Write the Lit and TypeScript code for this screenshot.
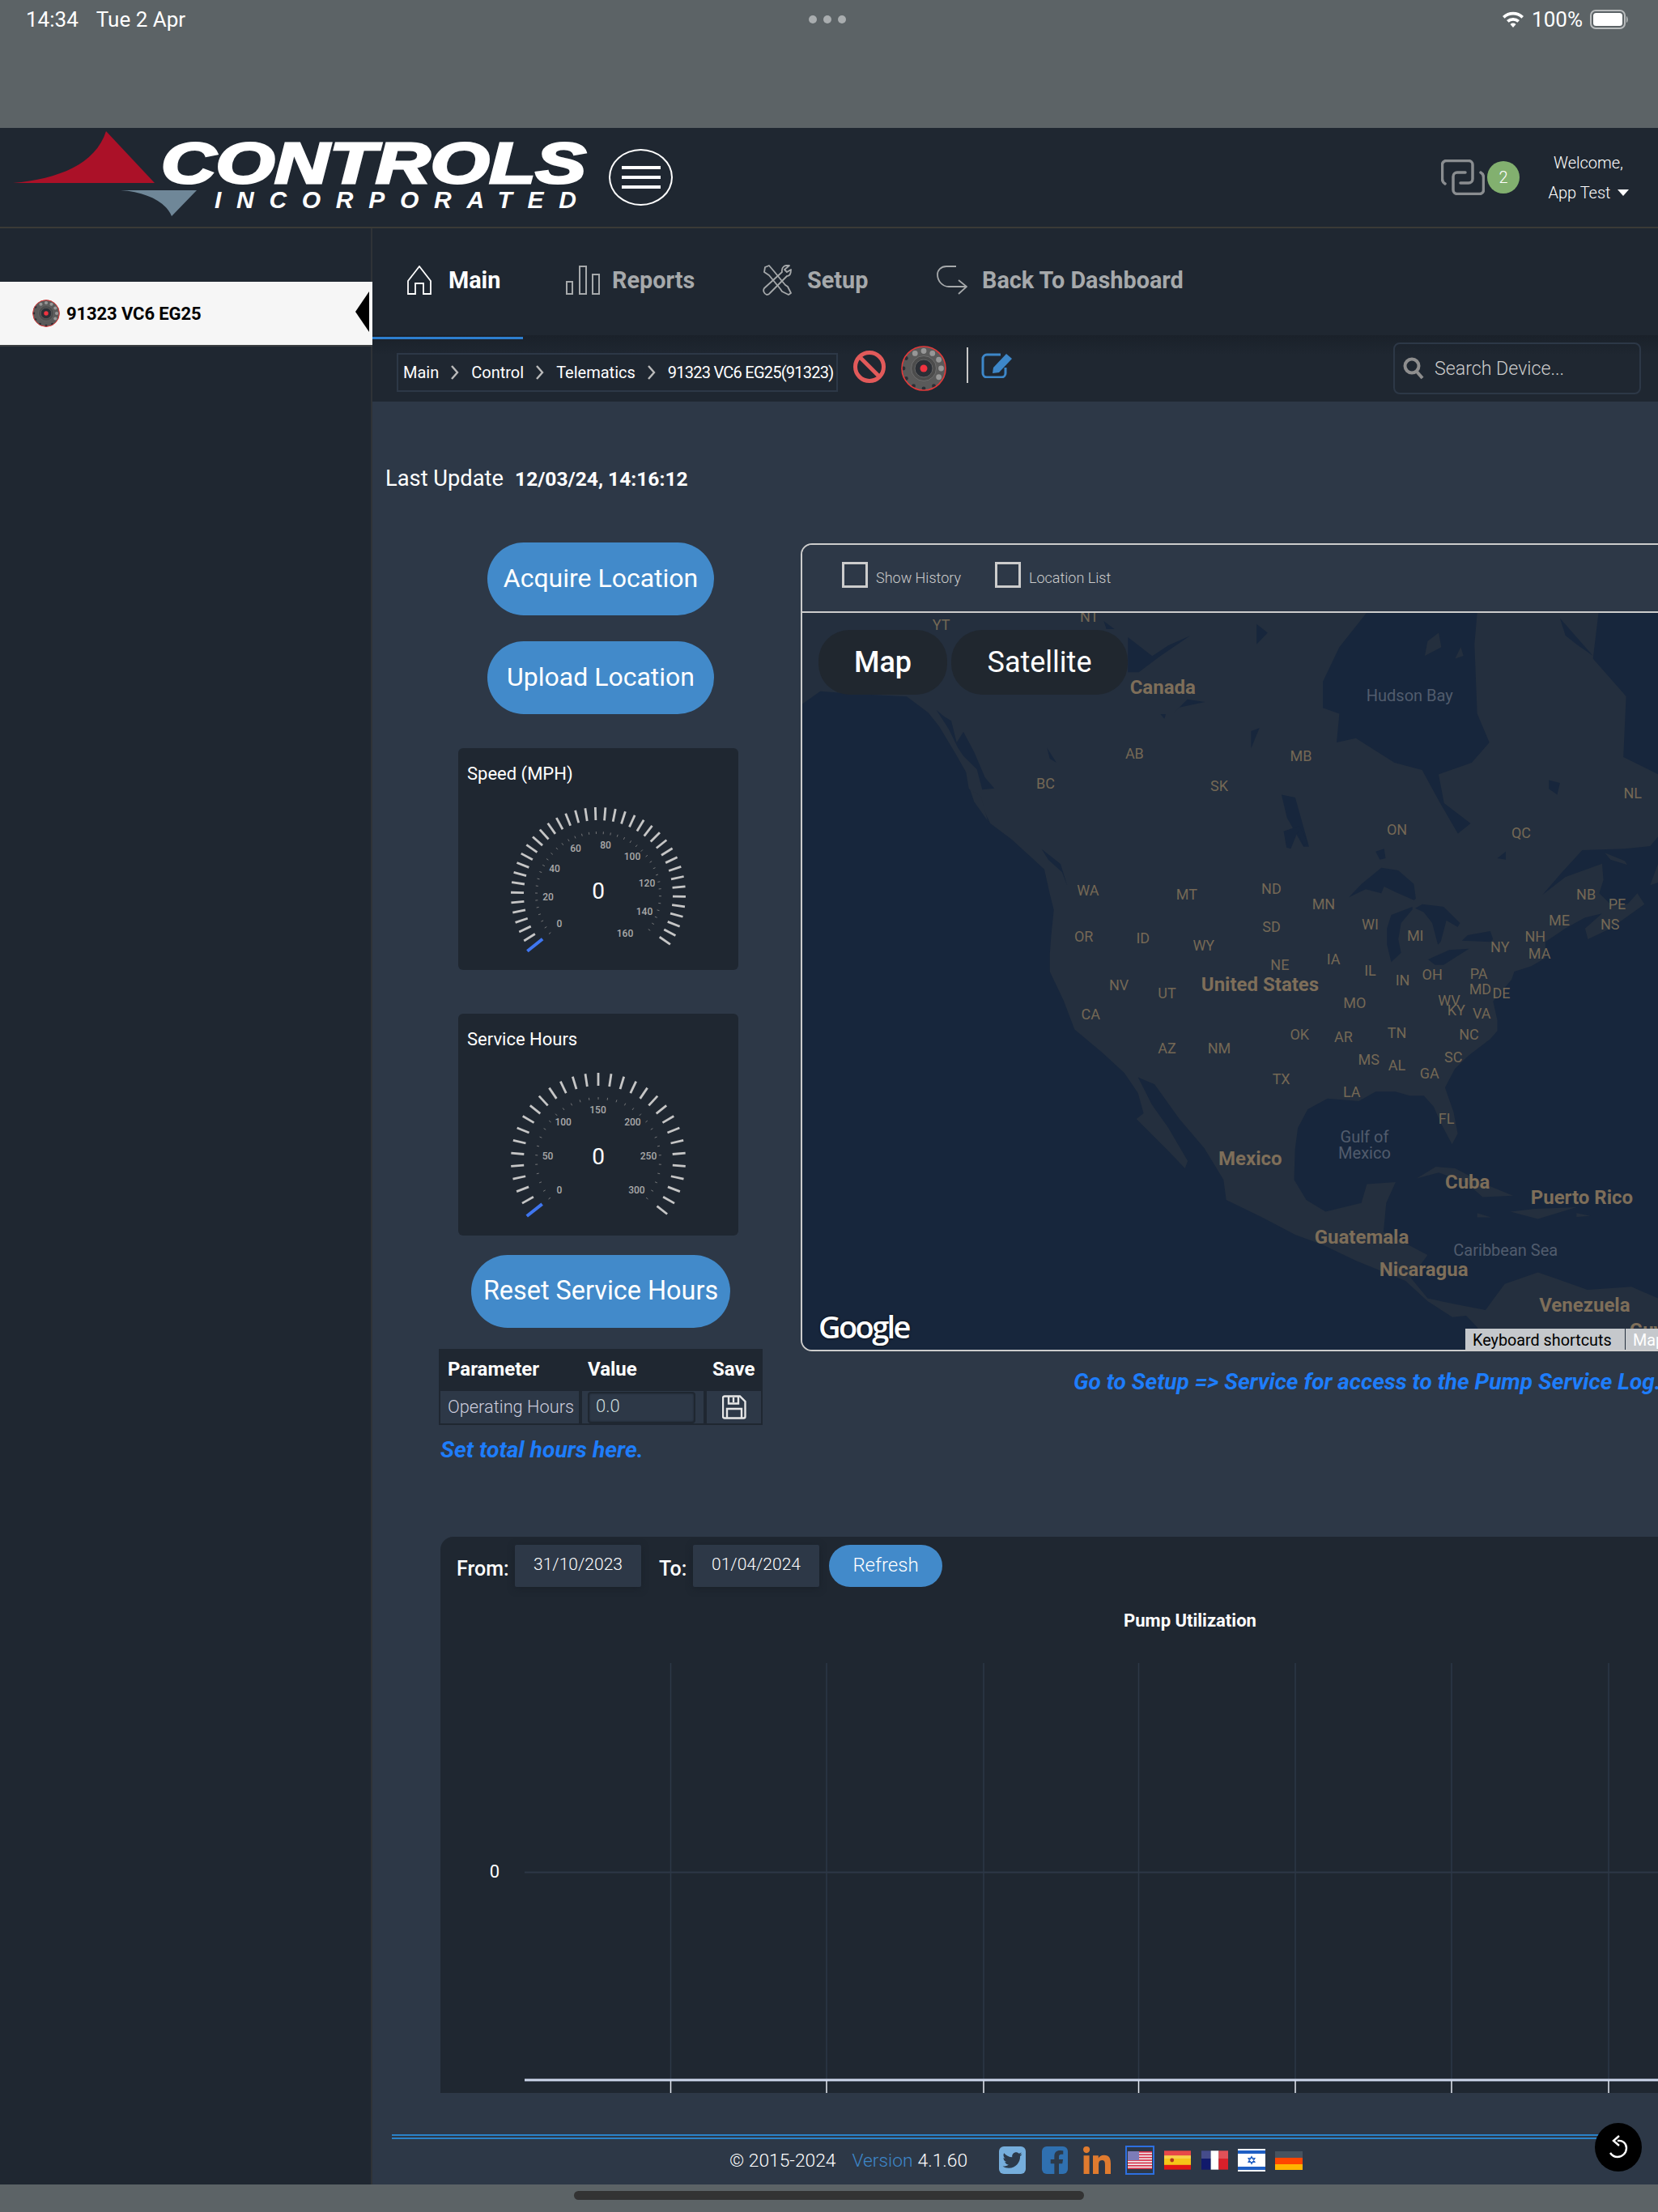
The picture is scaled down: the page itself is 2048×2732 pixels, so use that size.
import { LitElement, html, css, svg } from "lit";
import { customElement } from "lit/decorators.js";

const conv = (ox: number, oy: number, fx: number, fy: number) => (a: number[]) => { const o: string[] = []; for (let i = 0; i < a.length; i += 2) o.push(`${(ox + a[i] / fx).toFixed(1)},${(oy + a[i + 1] / fy).toFixed(1)}`); return o.join(" "); };
const z5 = conv(980, 660, 1.468, 2.8);
const z6 = conv(980, 1200, 1.468, 2.8);
const ca = conv(1500, 1020, 2.861, 3);
const cb = conv(990, 757, 3, 3);

const LAND = [
  z5([0,270,1568,270]),
  ca([1568,40,1540,75,1450,85,1300,90,1230,170,1160,255,1240,190,1370,140,1375,200,1360,250,1395,285,1460,290,1495,250,1520,290,1400,380,1320,420,1310,380,1370,325,1310,340,1240,380,1170,430,1170,490,1120,520,1060,540,1050,570,985,650,1000,720,1000,760,975,790,900,850,850,900,815,970,845,1060,860,1140,840,1180,800,1100,775,1040,740,1000,690,1000,640,985,570,985,510,1020,400,1010,330,1050,295,1120,285,1200]),
  z6([908,720,930,790,965,830,1030,800,1040,735,1092,728,1075,800,1070,900,1120,950,1150,980,1120,1060,1150,1130,1200,1150,1255,1170,1290,1080,1350,1040,1380,1060,1440,1100,1520,1090,1568,1130,1568,1312,1260,1312,1240,1230,1220,1190,1195,1195,1150,1140,1110,1070,1020,1000,960,945,910,910,850,850,785,790,780,720,745,610,700,510,655,390,625,365,650,460,680,540,715,655,710,680,680,620,622,510,635,490,625,420,600,350,560,280,510,200,490,100,465,0]),
  z5([465,1450]),
  cb([925,1200,935,1100,920,1040,900,950,780,840,700,780,660,700,620,650,610,590,570,520,510,420,470,370,390,310,200,300,70,290,0,340]),
].join(" ");
const WATER = [
  z5([1040,270,1240,270,1235,380,1240,620,1262,720,1230,790,1170,830,1180,930,1228,1000,1205,1035,1170,920,1140,815,1090,790,1020,705,985,720,990,620,960,600,960,510,990,390]),
  z5([1460,270,1450,430,1510,560,1505,770,1568,830,1568,270]),
  z5([1390,290,1450,420,1420,380,1400,350]),
  z5([830,680,845,670,830,740]),
  z5([885,900,910,910,935,1080,925,1080,895,980]),
  z5([840,310,860,340,840,380]),
  z5([1370,850,1390,860,1385,900,1370,880]),
  cb([1210,90,1300,160,1360,120,1440,85,1330,160,1250,220,1210,220]),
  cb([1380,370,1430,320,1495,330,1400,350]),
  cb([1330,375,1350,375,1345,392]),
  cb([1120,30,1160,60,1130,60]),
  cb([500,360,530,385,555,400,575,480,600,440,640,515,680,610,715,650,670,655,650,580,600,530,580,500,545,430]),
  cb([890,875,960,930,985,1010,965,960,915,915]),
  cb([910,500,945,555,920,540]),
  ca([475,265,520,215,590,155,650,165,705,215,712,270,705,275,640,245,600,225,590,250,535,235]),
  ca([625,330,700,300,700,310,660,360,650,420,660,470,625,505,610,440,610,380]),
  ca([710,305,735,290,810,300,868,360,860,375,820,350,800,430,790,440,770,360,740,320]),
  ca([755,495,830,460,900,455,810,515,780,515]),
  ca([875,425,895,405,975,390,985,420,975,430]),
  ca([570,95,600,85,605,120,585,125]),
  ca([245,20,300,0,330,60,315,75,295,20,270,85,255,80]),
  ca([1000,120,1030,95,1030,125]),
];
const ISLES = [
  z5([1150,370,1170,340,1175,390,1145,420]),
  z5([1210,390,1200,430,1215,420]),
  z6([1130,715,1165,675,1200,680,1260,740,1305,775,1250,780,1220,730,1170,695]),
  z6([1300,830,1345,820,1420,815,1350,855]),
  z6([1240,835,1265,850,1240,850]),
  z6([1420,835,1445,845,1420,848]),
  cb([625,655,665,680,690,770,640,700]),
  ca([1380,100,1450,130,1460,145,1400,125]),
  ca([1568,140,1540,220,1568,210]),
];
const LABELS: [string, number, number, number][] = [
  ["YT",667,443,0],["NT",772,437,0],["Canada",824,487,1],["Hudson Bay",999,493,2],["AB",804,534,0],["MB",922,536,0],["BC",741,555,0],["SK",864,557,0],["NL",1157,562,0],["ON",990,588,0],["QC",1078,590,0],
  ["WA",771,631,0],["MT",841,634,0],["ND",901,630,0],["NB",1124,634,0],["PE",1146,641,0],["MN",938,641,0],["ME",1105,652,0],["NS",1141,655,0],["SD",901,657,0],["WI",971,655,0],["MI",1003,663,0],["OR",768,664,0],["ID",810,665,0],["WY",853,670,0],["NH",1088,664,0],["NY",1063,671,0],["MA",1091,676,0],["NE",907,684,0],["IA",945,680,0],["IL",971,688,0],["IN",994,695,0],["OH",1015,691,0],["PA",1048,690,0],["MD",1049,701,0],["NV",793,698,0],["UT",827,704,0],["United States",893,698,1],["DE",1064,704,0],["WV",1027,709,0],["MO",960,711,0],["KY",1032,716,0],["VA",1050,718,0],["CA",773,719,0],["OK",921,733,0],["AR",952,735,0],["TN",990,732,0],["NC",1041,733,0],["AZ",827,743,0],["NM",864,743,0],["MS",970,751,0],["AL",990,755,0],["SC",1030,749,0],["GA",1013,761,0],["TX",908,765,0],["LA",958,774,0],["FL",1025,793,0],
  ["Gulf of",967,806,2],["Mexico",967,817,2],["Mexico",886,821,1],["Cuba",1040,838,1],["Puerto Rico",1121,849,1],["Guatemala",965,877,1],["Caribbean Sea",1067,886,2],["Nicaragua",1009,900,1],["Venezuela",1123,925,1],["Guyana",1178,943,1],
];

const gaugeSvg = (n: number, start: number, end: number, labels: [string, number, number][]) => {
  const ticks = [];
  const minors = [];
  const rad = (d: number) => (d - 90) * Math.PI / 180;
  for (let i = 0; i <= n; i++) {
    const a = rad(start + (end - start) * i / n);
    const blue = i === 0;
    const r1 = blue ? 88 : 92, r2 = blue ? 112 : 108;
    ticks.push(svg`<line x1=${173 + r1 * Math.cos(a)} y1=${181 + r1 * Math.sin(a)} x2=${173 + r2 * Math.cos(a)} y2=${181 + r2 * Math.sin(a)} stroke=${blue ? "#3f76f0" : "#c6c6c6"} stroke-width=${blue ? 4 : 2.8}></line>`);
    const b1 = 78, b2 = 75;
    minors.push(svg`<line x1=${173 + b1 * Math.cos(a)} y1=${181 + b1 * Math.sin(a)} x2=${173 + b2 * Math.cos(a)} y2=${181 + b2 * Math.sin(a)} stroke="#8a8a8a" stroke-width="0.8"></line>`);
  }
  return html`<svg class="gauge" width="346" height="224" viewBox="0 50 346 224">
    ${ticks}${minors}
    ${labels.map(l => svg`<text class="gl" x=${l[1]} y=${l[2]} text-anchor="middle" dominant-baseline="central">${l[0]}</text>`)}
    <text class="gv" x="173" y="176" text-anchor="middle" dominant-baseline="central">0</text>
  </svg>`;
};

const gear = (s: number) => {
  const bumps = [];
  for (let i = 0; i < 12; i++) {
    const a = -Math.PI * 2 / 3 + i * Math.PI / 6;
    const light = i < 6;
    bumps.push(light
      ? svg`<circle cx=${28 + 21.5 * Math.cos(a)} cy=${28 + 21.5 * Math.sin(a)} r="3.400" fill="#979797"></circle>`
      : svg`<circle cx=${28 + 25 * Math.cos(a)} cy=${28 + 25 * Math.sin(a)} r="2.400" fill="#2a2f36"></circle>`);
  }
  return html`<svg width=${s} height=${s} viewBox="0 0 56 56"><circle cx="28" cy="28" r="27" fill="#5a5a5a"></circle>${bumps}<circle cx="28" cy="28" r="27" fill="none" stroke="#e23a3a" stroke-width="1.600"></circle><circle cx="28" cy="28" r="15.500" fill="#4c4c4c" stroke="#6e6e6e" stroke-width="1"></circle><circle cx="28" cy="28" r="11" fill="#2b2f36" stroke="#666" stroke-width="1"></circle><circle cx="28" cy="28" r="4.500" fill="#ef3340"></circle></svg>`;
};

const shine = svg`<rect x="0" y="0" width="34" height="10" fill="#fff" opacity=".22"></rect>`;

@customElement("app-root")
export class AppRoot extends LitElement {
  static styles = css`
    :host { display:block; width:2048px; height:2732px; overflow:hidden; position:relative; background:#2d3847; font-family:Roboto,"Liberation Sans",sans-serif; color:#fff; }
    * { box-sizing:border-box; }
    svg { display:block; flex:none; }
    .status { height:158px; background:#5c6366; display:grid; grid-template-columns:1fr auto 1fr; align-items:start; padding:10px 36px 0 32px; font-size:26px; }
    .status .l { display:flex; gap:22px; line-height:28px; }
    .dots { display:flex; gap:8px; margin-top:9px; }
    .dots i { width:10px; height:10px; border-radius:50%; background:#a9adaf; }
    .status .r { display:flex; justify-content:flex-end; align-items:center; gap:9px; line-height:28px; }
    .header { height:124px; background:#1f2731; border-bottom:2px solid #3a3a36; display:flex; align-items:center; padding-right:36px; }
    .logo-c { font:italic 700 70px "Liberation Sans",sans-serif; fill:#fff; stroke:#fff; stroke-width:3; }
    .logo-i { font:italic 700 30px "Liberation Sans",sans-serif; fill:#fff; }
    .burger { width:79px; height:70px; border:2px solid #fff; border-radius:50%; margin-left:16px; display:flex; flex-direction:column; gap:8px; align-items:center; justify-content:center; }
    .burger i { width:48px; height:4px; background:#fff; }
    .hright { margin-left:auto; display:flex; align-items:center; }
    .badge { width:40px; height:40px; border-radius:50%; background:#82b06f; margin-left:3px; font-size:20px; font-weight:300; display:flex; align-items:center; justify-content:center; }
    .welcome { margin-left:35px; width:100px; font-size:20px; font-weight:300; display:flex; flex-direction:column; align-items:center; gap:13px; line-height:24px; }
    .welcome span { display:flex; align-items:center; gap:8px; }
    .caret { width:0; height:0; border-left:7px solid transparent; border-right:7px solid transparent; border-top:8px solid #fff; }
    .body { display:flex; height:2416px; }
    .side { width:460px; flex:none; background:#1f2731; border-right:2px solid #2f3337; padding-top:66px; }
    .dev { position:relative; height:78px; width:460px; background:#f6f6f6; box-shadow:0 2px 0 #3b3e42; display:flex; align-items:center; padding-left:40px; gap:8px; color:#000; font-size:22px; font-weight:700; letter-spacing:-.1px; }
    .notch { position:absolute; right:4px; top:12px; width:0; height:0; border-top:25px solid transparent; border-bottom:25px solid transparent; border-right:17px solid #000; }
    .main { flex:1; min-width:0; overflow:hidden; }
    .nav { height:132px; background:#1f2731; display:flex; align-items:center; padding-bottom:5px; color:#a6a9ab; font-size:28.800px; font-weight:700; }
    .nav .it { display:flex; align-items:center; white-space:nowrap; }
    .nav .main-it { color:#fff; width:186px; padding-left:43px; gap:21px; }
    .nav .rep { margin-left:53px; gap:15px; width:159px; }
    .nav .set { margin-left:84px; gap:19px; width:131px; }
    .nav .bk { margin-left:84px; gap:18px; }
    .under { height:3px; width:186px; background:#2d7fcf; margin-bottom:-3px; position:relative; top:2px; }
    .crumbs { height:82px; background:linear-gradient(#1a212a,#1f2731 30%); display:flex; align-items:center; padding-left:30px; }
    .cbox { width:545px; height:48px; margin-top:10px; border:2px solid #2d3847; padding:0 0 0 6px; display:flex; align-items:center; font-size:20px; white-space:nowrap; }
    .cbox b { font-weight:400; }
    .cbox b.lastc { letter-spacing:-.75px; }
    .cbox svg { margin:0 14px 0 14px; }
    .ban { margin-left:19px; margin-bottom:4px; }
    .gear2 { margin-left:19px; }
    .vsep { margin-left:25px; width:2px; height:44px; background:#c8c8c8; margin-bottom:8px; }
    .edit { margin-left:16px; margin-bottom:8px; }
    .search { margin-left:auto; margin-right:21px; width:306px; height:64px; border:2px solid #2d3847; border-radius:8px; display:flex; align-items:center; padding-left:10px; gap:13px; font-size:23.200px; font-weight:300; color:#ccc; }
    .last { margin-top:75px; height:40px; padding-left:16px; display:flex; align-items:center; font-size:27.300px; gap:14px; white-space:nowrap; }
    .last b { font-weight:700; font-size:24.600px; }
    .cols { margin-top:59px; height:1228px; padding-left:82px; display:flex; }
    .lc { width:400px; flex:none; display:flex; flex-direction:column; align-items:center; }
    .btn { height:90px; border-radius:45px; background:#428aca; display:flex; align-items:center; justify-content:center; font-size:32px; color:#fff; white-space:nowrap; padding-bottom:3px; }
    .b1 { width:280px; }
    .b2 { width:280px; margin-top:32px; margin-bottom:42px; }
    .b3 { width:320px; margin-top:24px; margin-bottom:26px; font-size:32.400px; }
    .gcard { width:346px; height:274px; background:#1f2731; border-radius:6px; margin-left:-6px; }
    .gcard + .gcard { margin-top:54px; }
    .gcard h4 { margin:0; height:50px; padding:18px 0 0 11px; font-weight:400; font-size:22px; line-height:28px; white-space:nowrap; }
    .gl { font:500 12px Roboto,sans-serif; fill:#aaa; }
    .gv { font:400 28px Roboto,sans-serif; fill:#fff; }
    .tbl { width:400px; display:grid; grid-template-columns:175px 154px 71px; font-size:24px; }
    .tbl .th { height:50px; background:#1f2731; font-weight:700; display:flex; align-items:center; padding-left:11px; }
    .tbl .th.v { padding-left:9px; }
    .tbl .th.s { padding-left:9px; }
    .tbl .td { height:44px; border:2px solid #1f2731; display:flex; align-items:center; }
    .tbl .op { padding-left:9px; font-weight:300; font-size:21.800px; color:#ccd; white-space:nowrap; padding-bottom:2px; }
    .tbl .inp { padding:0 0 0 7px; }
    .tbl .inp div { width:133px; height:39px; border:2px solid #1f2731; border-radius:4px; padding-left:8px; display:flex; align-items:center; font-size:22px; font-weight:300; color:#cdd; box-shadow:0 0 2px #1a212a inset; padding-bottom:3px; }
    .tbl .sv { justify-content:center; }
    .note { font-style:italic; font-weight:700; color:#1e7dfb; white-space:nowrap; }
    .n1 { align-self:flex-start; font-size:28.300px; line-height:32px; margin-top:15px; margin-left:2px; }
    .rc { margin-left:47px; flex:none; width:1100px; margin-top:1px; }
    .mapf { position:relative; width:1100px; height:998px; border:2px solid #ccc; border-top-left-radius:14px; border-bottom-left-radius:14px; overflow:hidden; }
    .mhead { height:84px; background:#2d3847; border-bottom:2px solid #ccc; display:flex; align-items:flex-start; padding:21px 0 0 49px; font-size:18px; font-weight:300; color:#ccc; white-space:nowrap; }
    .chk { width:32px; height:32px; border:3px solid #ccc; margin-right:10px; }
    .mhead span { line-height:40px; }
    .s1 { width:116px; margin-right:0; }
    .s1b { margin-left:31px; }
    .canvas { position:relative; height:912px; background:#17263c; overflow:hidden; }
    .lb0 { font:400 18px Roboto,sans-serif; fill:#746855; }
    .lb1 { font:700 24px Roboto,sans-serif; fill:#7e6e59; }
    .lb2 { font:400 20px Roboto,sans-serif; fill:#515c6d; }
    .pill { position:absolute; top:21px; height:80px; border-radius:38px; background:#20272f; display:flex; align-items:center; justify-content:center; font-size:36px; font-weight:500; }
    .p1 { left:20px; width:159px; }
    .p2 { left:184px; width:218px; font-weight:400; }
    .goog { position:absolute; left:20px; bottom:6px; font:600 38px "Open Sans",Roboto,sans-serif; letter-spacing:-2.600px; text-shadow:0 0 3px #000; line-height:50px; }
    .kbd { position:absolute; left:819px; bottom:0; height:28px; width:197px; background:#c5c8cc; color:#000; font-size:19.800px; display:flex; align-items:center; padding-left:9px; white-space:nowrap; }
    .mdata { position:absolute; left:1017px; bottom:0; height:28px; width:80px; background:#c5c8cc; color:#fff; font-size:19.800px; display:flex; align-items:center; padding-left:9px; white-space:nowrap; }
    .n2 { font-size:28px; line-height:34px; margin-top:21px; margin-left:337px; }
    .chart { margin-left:84px; width:1852px; height:687px; background:#1f2731; border-radius:16px 0 0 0; }
    .chead { padding:10px 0 0 20px; display:flex; align-items:flex-start; height:62px; font-size:25px; font-weight:500; }
    .chead label { line-height:60px; white-space:nowrap; }
    .l1 { width:72px; }
    .l2 { width:42px; margin-left:22px; }
    .date { width:156px; height:52px; background:#2d3847; border-radius:2px; box-shadow:0 2px 8px #1a212a; display:flex; align-items:center; justify-content:center; font-size:21px; font-weight:300; padding-bottom:4px; }
    .rf { width:140px; height:52px; border-radius:26px; background:#428aca; display:flex; align-items:center; justify-content:center; font-size:24px; font-weight:300; margin-left:12px; padding-bottom:2px; }
    .ctitle { text-align:center; font-size:22px; font-weight:700; line-height:28px; margin-top:28px; }
    .foot { position:relative; padding:51px 0 0 24px; height:113px; }
    .dbl { width:1496px; height:6px; border-top:2px solid #2a82c8; border-bottom:2px solid #2a82c8; }
    .frow { display:flex; align-items:center; height:48px; margin:2px 0 0 417px; font-size:22.800px; font-weight:300; white-space:nowrap; }
    .ver { color:#3d87c9; margin-left:20px; }
    .vn { margin-left:6px; }
    .soc { margin-left:39px; }
    .fb { margin-left:20px; }
    .li { margin-left:19px; }
    .flag { border:2px solid #2d6fe0; padding:5px 1px; width:36px; height:36px; margin-left:18px; }
    .fl12 { margin-left:12px; }
    .fl13 { margin-left:13px; }
    .reload { position:absolute; left:1510px; top:37px; width:58px; height:60px; border-radius:50%; background:#000; display:flex; align-items:center; justify-content:center; }
    .bottom { height:34px; background:#5c6366; display:flex; justify-content:center; padding-top:8px; }
    .bottom i { width:630px; height:11px; border-radius:6px; background:#333; }
  `;

  render() {
    return html`
      <div class="status">
        <div class="l"><span>14:34</span><span>Tue 2 Apr</span></div>
        <div class="dots"><i></i><i></i><i></i></div>
        <div class="r">
          <svg width="28" height="24" viewBox="0 0 28 24"><path d="M1 8a19 19 0 0 1 26 0l-2.600 2.800a15 15 0 0 0-20.800 0zM6 13a12 12 0 0 1 16 0l-2.600 2.800a8 8 0 0 0-10.800 0zM10.500 18a5 5 0 0 1 7 0L14 22z" fill="#fff"></path></svg>
          <span>100%</span>
          <svg width="48" height="24" viewBox="0 0 48 24"><rect x="1" y="1" width="42" height="22" rx="6" fill="none" stroke="#b9bcbd" stroke-width="2"></rect><rect x="4" y="4" width="36" height="16" rx="3.500" fill="#fff"></rect><path d="M45 8c2 1 2.500 7 0 8z" fill="#b9bcbd"></path></svg>
        </div>
      </div>
      <div class="header">
        <svg width="736" height="124" viewBox="0 0 736 124">
          <path d="M16 69C72 64 118 46 131 5L191 69Z" fill="#ab1128"></path>
          <path d="M149 78H243L212 110C205 92 180 80 149 78Z" fill="#6f8798"></path>
          <text class="logo-c" x="199" y="69" textLength="525" lengthAdjust="spacingAndGlyphs">CONTROLS</text>
          <text class="logo-i" x="265" y="100" textLength="447" lengthAdjust="spacing">INCORPORATED</text>
        </svg>
        <div class="burger"><i></i><i></i><i></i></div>
        <div class="hright">
          <svg width="54" height="44" viewBox="0 0 54 44" fill="none" stroke="#8a8d90" stroke-width="3.500" stroke-linecap="round"><path d="M5 30Q1.500 28 1.500 24V6.500a5 5 0 0 1 5-5H34a5 5 0 0 1 5 5V24a5 5 0 0 1-5 5H24"></path><path d="M49 16Q52.500 18 52.500 22V37.500a5 5 0 0 1-5 5H20a5 5 0 0 1-5-5V21a5 5 0 0 1 5-5H30"></path></svg>
          <div class="badge">2</div>
          <div class="welcome"><div>Welcome,</div><span>App Test <i class="caret"></i></span></div>
        </div>
      </div>
      <div class="body">
        <div class="side">
          <div class="dev">${gear(34)}<span>91323 VC6 EG25</span><i class="notch"></i></div>
        </div>
        <div class="main">
          <div class="nav">
            <div class="it main-it"><svg width="30" height="36" viewBox="0 0 30 36" fill="none" stroke="#fff" stroke-width="1.800"><path d="M1 19 15 1l14 18v16H20V22H10v13H1z"></path></svg><span>Main</span></div>
            <div class="it rep"><svg width="42" height="36" viewBox="0 0 42 36" fill="none" stroke="#a6a9ab" stroke-width="2"><rect x="1" y="20" width="7" height="15"></rect><rect x="17" y="1" width="8" height="34"></rect><rect x="33" y="11" width="8" height="24"></rect></svg><span>Reports</span></div>
            <div class="it set"><svg width="36" height="38" viewBox="0 0 36 38" fill="none" stroke="#a6a9ab" stroke-width="1.800" stroke-linejoin="round"><path d="M3 3 8 1l6 7 14 17 3 2 4 8-3 2-8-4-2-3L8 13 2 9z" ></path><path d="M33 1c-6-1-10 2-9 8L2 29c-2 3 0 7 3 8 2 0 3 0 4-2L30 14c3 0 5-2 5-8l-5 3-3-3z"></path></svg><span>Setup</span></div>
            <div class="it bk"><svg width="38" height="36" viewBox="0 0 38 36" fill="none" stroke="#a6a9ab" stroke-width="1.800"><path d="M24 1H12C5 1 1 6 1 11c0 8 6 15 14 15h22"></path><path d="M27 18l10 8-10 9"></path></svg><span>Back To Dashboard</span></div>
          </div>
          <div class="under"></div>
          <div class="crumbs">
            <div class="cbox"><b>Main</b>${this.chev()}<b>Control</b>${this.chev()}<b>Telematics</b>${this.chev()}<b class="lastc">91323 VC6 EG25(91323)</b></div>
            <svg class="ban" width="40" height="40" viewBox="0 0 40 40" fill="none" stroke="#e25a5a" stroke-width="5"><circle cx="20" cy="20" r="17.500"></circle><path d="M8 8l24 24"></path></svg>
            <div class="gear2">${gear(56)}</div>
            <div class="vsep"></div>
            <svg class="edit" width="40" height="32" viewBox="0 0 40 32" fill="none" stroke="#3d87c9" stroke-width="3"><path d="M24 3H7a5 5 0 0 0-5 5v18a5 5 0 0 0 5 5h18a5 5 0 0 0 5-5V19"></path><path d="M14 26l1-7L31 2l7 6-16 17z" fill="#3d87c9" stroke="none"></path></svg>
            <div class="search"><svg width="26" height="28" viewBox="0 0 26 28" fill="none" stroke="#8e8e8e" stroke-width="4"><circle cx="11" cy="11" r="8.500"></circle><path d="M17 18l7 8"></path></svg><span>Search Device...</span></div>
          </div>
          <div class="last"><span>Last Update</span><b>12/03/24, 14:16:12</b></div>
          <div class="cols">
            <div class="lc">
              <div class="btn b1">Acquire Location</div>
              <div class="btn b2">Upload Location</div>
              <div class="gcard"><h4>Speed (MPH)</h4>${gaugeSvg(38, -128.5, 124.6, [["0",125,217],["20",111,184],["40",119,149],["60",145,124],["80",182,119.5],["100",215,134],["120",233,166.6],["140",230,202],["160",206,229]])}</div>
              <div class="gcard"><h4>Service Hours</h4>${gaugeSvg(30, -128, 128, [["0",125,217.5],["50",110.6,175.6],["100",129.7,134],["150",172.5,119],["200",215.4,134],["250",235,175.6],["300",220.4,217.5]])}</div>
              <div class="btn b3">Reset Service Hours</div>
              <div class="tbl">
                <div class="th">Parameter</div><div class="th v">Value</div><div class="th s">Save</div>
                <div class="td op">Operating Hours</div>
                <div class="td inp"><div>0.0</div></div>
                <div class="td sv"><svg width="30" height="30" viewBox="0 0 30 30" fill="none" stroke="#e6e6e6" stroke-width="2.400"><path d="M3 1.500h19l6.500 6.500v18.500a2 2 0 0 1-2 2H3a2 2 0 0 1-2-2v-23a2 2 0 0 1 2-2z"></path><path d="M8 1.500v9h12v-9M14 3v6M6 28.500V17h18v11.500"></path></svg></div>
              </div>
              <div class="note n1">Set total hours here.</div>
            </div>
            <div class="rc">
              <div class="mapf">
                <div class="mhead"><i class="chk"></i><span class="s1">Show History</span><i class="chk s1b"></i><span>Location List</span></div>
                <div class="canvas">
                  <svg width="1096" height="912" viewBox="991 757 1096 912">
                    <polygon points=${LAND} fill="#242f3e"></polygon>
                    ${WATER.map(p => svg`<polygon points=${p} fill="#17263c"></polygon>`)}
                    ${ISLES.map(p => svg`<polygon points=${p} fill="#242f3e"></polygon>`)}
                    ${LABELS.map(l => svg`<text class=${"lb" + l[3]} x=${l[1] * 1.743} y=${l[2] * 1.7424} text-anchor="middle" dominant-baseline="central">${l[0]}</text>`)}
                  </svg>
                  <div class="pill p1">Map</div>
                  <div class="pill p2">Satellite</div>
                  <div class="goog">Google</div>
                  <div class="kbd">Keyboard shortcuts</div>
                  <div class="mdata">Map data</div>
                </div>
              </div>
              <div class="note n2">Go to Setup =&gt; Service for access to the Pump Service Log.</div>
            </div>
          </div>
          <div class="chart">
            <div class="chead">
              <label class="l1">From:</label><div class="date">31/10/2023</div>
              <label class="l2">To:</label><div class="date">01/04/2024</div>
              <div class="rf">Refresh</div>
            </div>
            <div class="ctitle">Pump Utilization</div>
            <svg width="1504" height="569" viewBox="544 2016 1504 569">
              ${[828.5, 1021, 1215, 1406.5, 1600, 1793, 1987].map(x => svg`
                <line x1=${x} x2=${x} y1="2054" y2="2568" stroke="#2d3847" stroke-width="1.500"></line>
                <line x1=${x} x2=${x} y1="2568" y2="2585" stroke="#e8ecf4" stroke-width="1.500"></line>`)}
              <line x1="648" x2="2048" y1="2312.500" y2="2312.500" stroke="#2d3847" stroke-width="2"></line>
              <line x1="648" x2="2048" y1="2569" y2="2569" stroke="#ccd6eb" stroke-width="3"></line>
              <text x="611" y="2311" text-anchor="middle" dominant-baseline="central" fill="#fff" font-size="22" font-family="Roboto,sans-serif">0</text>
            </svg>
          </div>
          <div class="foot">
            <div class="dbl"></div>
            <div class="frow">
              <span>© 2015-2024</span><span class="ver">Version</span><span class="vn">4.1.60</span>
              <svg class="soc" width="33" height="34" viewBox="0 0 33 34"><rect width="33" height="34" rx="6" fill="#76aedc"></rect><svg x="4" y="5" width="25" height="24" viewBox="0 0 512 512"><path fill="#2c3a4a" d="M459.37 151.716c.325 4.548.325 9.097.325 13.645 0 138.72-105.583 298.558-298.558 298.558-59.452 0-114.68-17.219-161.137-47.106 8.447.974 16.568 1.299 25.34 1.299 49.055 0 94.213-16.568 130.274-44.832-46.132-.975-84.792-31.188-98.112-72.772 6.498.974 12.995 1.624 19.818 1.624 9.421 0 18.843-1.3 27.614-3.573-48.081-9.747-84.143-51.98-84.143-102.985v-1.299c13.969 7.797 30.214 12.67 47.431 13.319-28.264-18.843-46.781-51.005-46.781-87.391 0-19.492 5.197-37.36 14.294-52.954 51.655 63.675 129.3 105.258 216.365 109.807-1.624-7.797-2.599-15.918-2.599-24.04 0-57.828 46.782-104.934 104.934-104.934 30.213 0 57.502 12.67 76.67 33.137 23.715-4.548 46.456-13.32 66.599-25.34-7.798 24.366-24.366 44.833-46.132 57.827 21.117-2.273 41.584-8.122 60.426-16.243-14.292 20.791-32.161 39.308-52.628 54.253z"></path></svg></svg>
              <svg class="fb" width="32" height="34" viewBox="0 0 32 34"><rect width="32" height="34" rx="6" fill="#2f70b0"></rect><svg x="9" y="5" width="19" height="29" viewBox="0 0 320 512"><path fill="#2c3a4a" d="M279.14 288l14.22-92.66h-88.91v-60.13c0-25.35 12.42-50.06 52.24-50.06h40.42V6.26S260.43 0 225.36 0c-73.22 0-121.08 44.38-121.08 124.72v70.62H22.89V288h81.39v224h100.17V288z"></path></svg></svg>
              <svg class="li" width="34" height="34" viewBox="0 0 448 448"><path fill="#e07b2f" d="M100.28 448H7.4V148.9h92.88zM53.79 108.1C24.09 108.1 0 83.5 0 53.8a53.79 53.79 0 0 1 107.58 0c0 29.7-24.1 54.3-53.79 54.3zM447.9 448h-92.68V302.4c0-34.7-.7-79.2-48.29-79.2-48.29 0-55.69 37.7-55.69 76.7V448h-92.78V148.9h89.08v40.8h1.3c12.4-23.5 42.69-48.3 87.88-48.3 94 0 111.28 61.9 111.28 142.3V448z"></path></svg>
              <div class="flag"><svg width="30" height="22" viewBox="0 0 30 22"><rect width="30" height="22" fill="#eee"></rect>${[0,3.4,6.8,10.2,13.6,17,20.4].map(y => svg`<rect y=${y} width="30" height="1.700" fill="#d9304a"></rect>`)}<rect width="14" height="11" fill="#7c7cb8"></rect></svg></div>
              <svg class="fl12" width="33" height="24" viewBox="0 0 34 24"><rect width="34" height="24" fill="#e01515"></rect><rect y="6" width="34" height="12" fill="#f5c518"></rect>${shine}<circle cx="10" cy="12" r="2.500" fill="#b5321c"></circle></svg>
              <svg class="fl13" width="33" height="24" viewBox="0 0 34 24"><rect width="12" height="24" fill="#111a6b"></rect><rect x="12" width="10" height="24" fill="#fff"></rect><rect x="22" width="12" height="24" fill="#d8202a"></rect>${shine}</svg>
              <svg class="fl12" width="34" height="28" viewBox="0 0 34 28"><rect width="34" height="28" fill="#fff"></rect><rect y="2" width="34" height="4" fill="#1f5fc4"></rect><rect y="22" width="34" height="4" fill="#1f5fc4"></rect><path d="M17 9.500l4 7h-8zM17 18.500l-4-7h8z" fill="none" stroke="#1f5fc4" stroke-width="1.200"></path></svg>
              <svg class="fl12" width="34" height="23" viewBox="0 0 34 23"><rect width="34" height="8" fill="#47535f"></rect><rect y="8" width="34" height="8" fill="#ff4500"></rect><rect y="16" width="34" height="7" fill="#ffb400"></rect></svg>
            </div>
            <div class="reload"><svg width="24" height="30" viewBox="0 0 24 30" fill="none" stroke="#fff" stroke-width="2.400"><path d="M11 7c6-1 11 3 11 9 0 6-5 11-11 11-4 0-7-2-9-5"></path><path d="M13 1 6 7l7 6" ></path></svg></div>
          </div>
        </div>
      </div>
      <div class="bottom"><i></i></div>
    `;
  }

  chev() {
    return html`<svg width="12" height="20" viewBox="0 0 12 20" fill="none" stroke="#bbb" stroke-width="2.400"><path d="M2 2l7 8-7 8"></path></svg>`;
  }
}
